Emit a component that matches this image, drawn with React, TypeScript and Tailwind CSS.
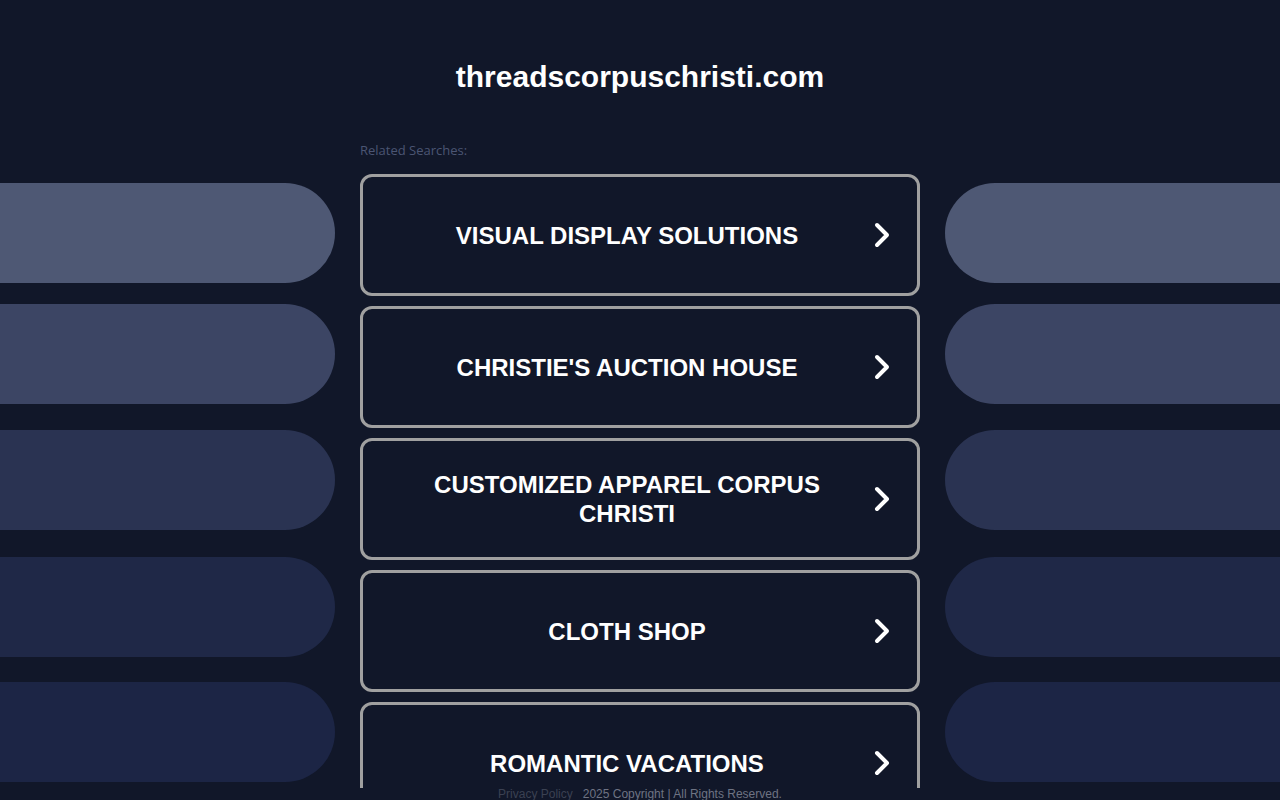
import React from "react";

const searches = [
  "VISUAL DISPLAY SOLUTIONS",
  "CHRISTIE'S AUCTION HOUSE",
  "CUSTOMIZED APPAREL CORPUS CHRISTI",
  "CLOTH SHOP",
  "ROMANTIC VACATIONS",
];

function Chevron() {
  return (
    <svg width="18" height="26" viewBox="0 0 18 26" fill="none" className="shrink-0">
      <polyline
        points="4,3 14,13 4,23"
        stroke="#ffffff"
        strokeWidth="4"
        strokeLinecap="round"
        strokeLinejoin="round"
      />
    </svg>
  );
}

function Pills({ side }: { side: "left" | "right" }) {
  const round = side === "left" ? "rounded-r-full" : "rounded-l-full";
  return (
    <div className="flex flex-col pt-[183px]">
      <div className={`h-[100px] bg-[#4e5874] ${round}`} />
      <div className={`mt-[21px] h-[100px] bg-[#3c4564] ${round}`} />
      <div className={`mt-[26px] h-[100px] bg-[#2a3352] ${round}`} />
      <div className={`mt-[27px] h-[100px] bg-[#1f2847] ${round}`} />
      <div className={`mt-[25px] h-[100px] bg-[#1c2545] ${round}`} />
    </div>
  );
}

export default function App() {
  return (
    <div
      className="relative h-[800px] w-full overflow-hidden bg-[#111729]"
      style={{ fontFamily: '"Liberation Sans", Arial, sans-serif' }}
    >
      <div className="grid h-[788px] grid-cols-[335px_560px_335px] gap-x-[25px] overflow-hidden">
        <Pills side="left" />

        <main className="flex flex-col">
          <h1 className="mt-[57px] text-center text-[30px] font-bold leading-[40px] text-white">
            threadscorpuschristi.com
          </h1>
          <p
            className="mt-[43px] text-[13px] leading-[20px] text-[#4b5573]"
            style={{ fontFamily: '"Open Sans", "Noto Sans", sans-serif' }}
          >
            Related Searches:
          </p>
          <div className="mt-[14px] flex flex-col gap-[10px]">
            {searches.map((s) => (
              <a
                key={s}
                href="#"
                className="flex h-[122px] shrink-0 items-center rounded-[12px] border-[3px] border-[#a0a0a0] pl-[40px] pr-[26px]"
              >
                <span className="flex-1 pr-[22px] text-center text-[24px] font-bold leading-[29px] text-white">
                  {s}
                </span>
                <Chevron />
              </a>
            ))}
          </div>
        </main>

        <Pills side="right" />
      </div>

      <footer className="flex h-[12px] items-center justify-center gap-[10px] text-[12px] leading-[12px]">
        <a href="#" className="text-[#3b4152]">
          Privacy Policy
        </a>
        <span className="text-[#6e7383]">2025 Copyright | All Rights Reserved.</span>
      </footer>
    </div>
  );
}
